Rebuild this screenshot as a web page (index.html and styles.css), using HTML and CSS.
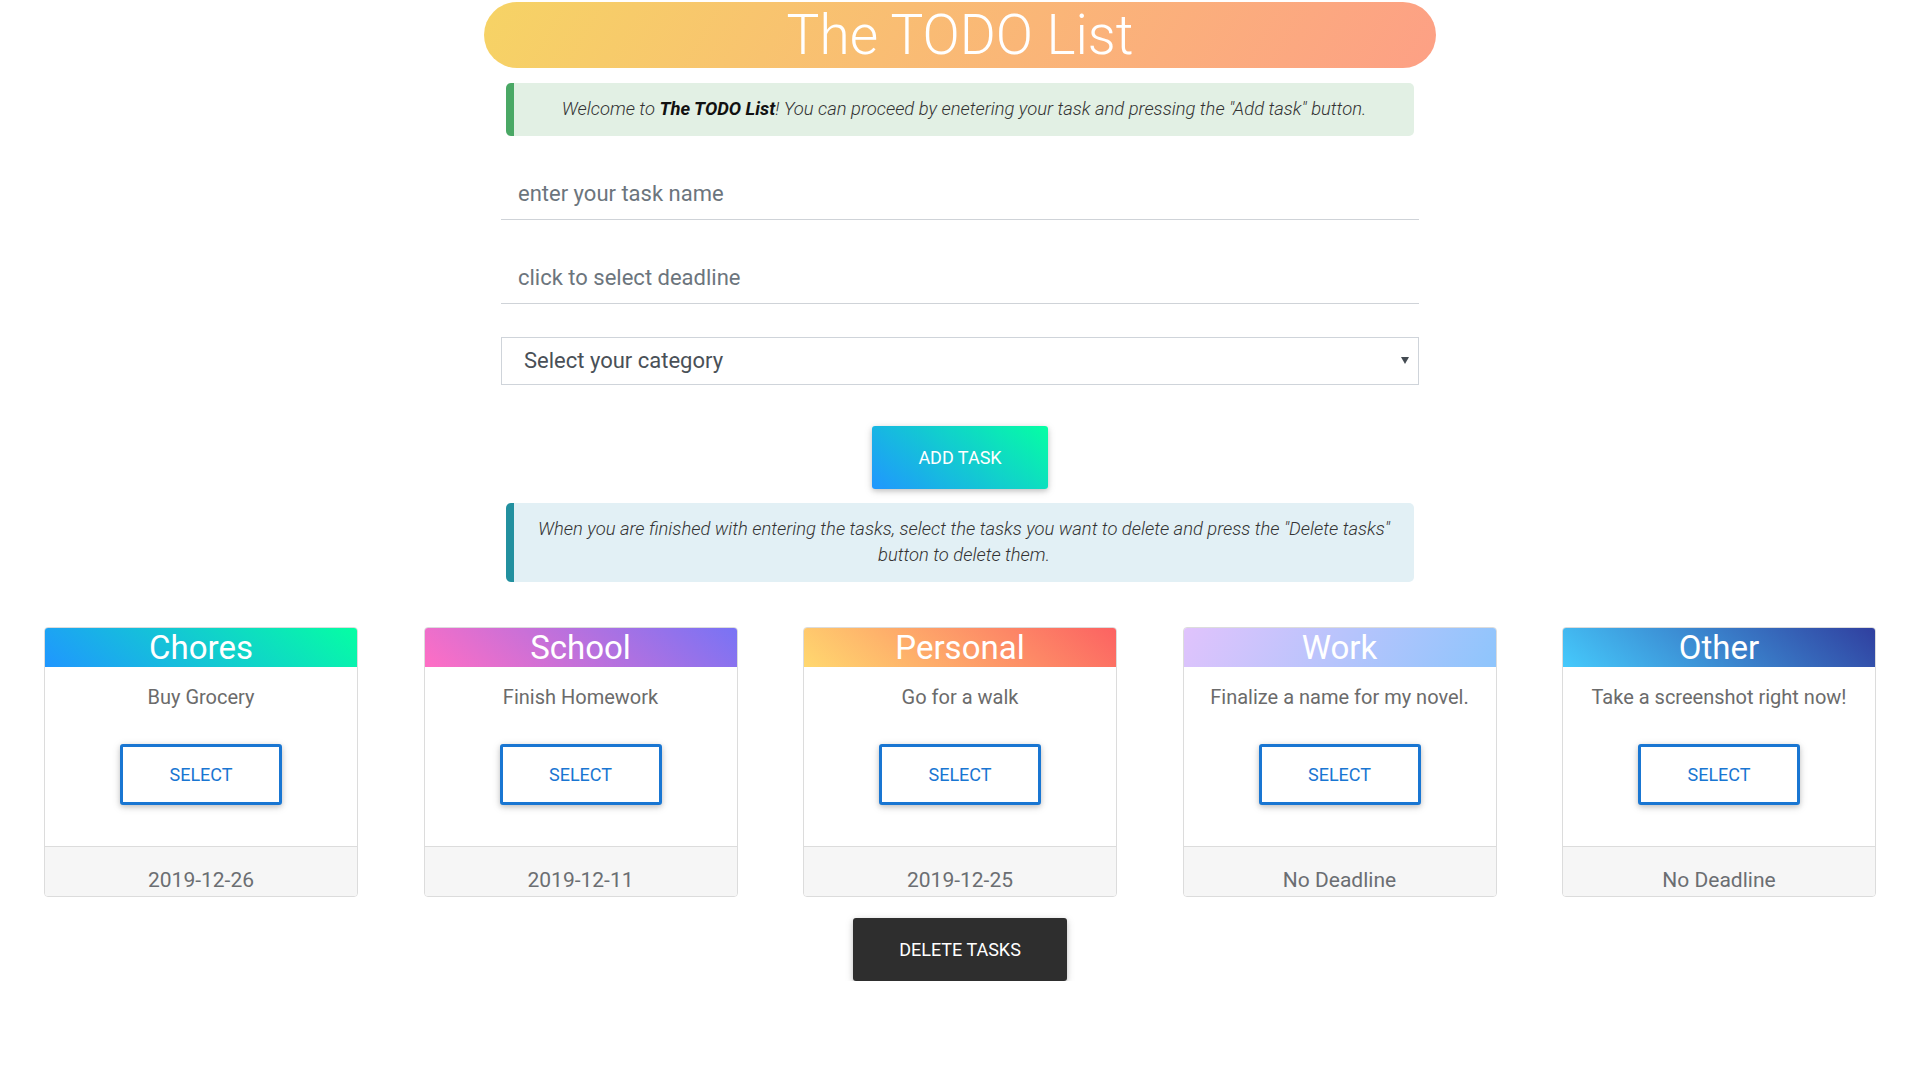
FILE: index.html
```html
<!DOCTYPE html>
<html lang="en">
<head>
<meta charset="utf-8">
<title>The TODO List</title>
<link rel="stylesheet" href="styles.css">
</head>
<body>
<div class="page">
  <header class="title-bar">
    <h1 class="title">The TODO List</h1>
  </header>

  <section class="form-area">
    <div class="callout callout-green">
      <p>Welcome to <strong>The TODO List</strong>! You can proceed by enetering your task and pressing the "Add task" button.</p>
    </div>

    <input class="line-input first" type="text" placeholder="enter your task name">
    <input class="line-input" type="text" placeholder="click to select deadline">

    <div class="select-wrap">
      <select class="category">
        <option>Select your category</option>
        <option>Chores</option>
        <option>School</option>
        <option>Personal</option>
        <option>Work</option>
        <option>Other</option>
      </select>
    </div>

    <button class="btn btn-add" type="button">Add task</button>

    <div class="callout callout-blue">
      <p>When you are finished with entering the tasks, select the tasks you want to delete and press the "Delete tasks" button to delete them.</p>
    </div>
  </section>

  <section class="cards">
    <article class="card">
      <div class="card-header grad-chores">Chores</div>
      <div class="card-body">
        <p class="card-text">Buy Grocery</p>
        <button class="btn btn-select" type="button">Select</button>
      </div>
      <div class="card-footer">2019-12-26</div>
    </article>
    <article class="card">
      <div class="card-header grad-school">School</div>
      <div class="card-body">
        <p class="card-text">Finish Homework</p>
        <button class="btn btn-select" type="button">Select</button>
      </div>
      <div class="card-footer">2019-12-11</div>
    </article>
    <article class="card">
      <div class="card-header grad-personal">Personal</div>
      <div class="card-body">
        <p class="card-text">Go for a walk</p>
        <button class="btn btn-select" type="button">Select</button>
      </div>
      <div class="card-footer">2019-12-25</div>
    </article>
    <article class="card">
      <div class="card-header grad-work">Work</div>
      <div class="card-body">
        <p class="card-text">Finalize a name for my novel.</p>
        <button class="btn btn-select" type="button">Select</button>
      </div>
      <div class="card-footer">No Deadline</div>
    </article>
    <article class="card">
      <div class="card-header grad-other">Other</div>
      <div class="card-body">
        <p class="card-text">Take a screenshot right now!</p>
        <button class="btn btn-select" type="button">Select</button>
      </div>
      <div class="card-footer">No Deadline</div>
    </article>
  </section>

  <div class="delete-row">
    <button class="btn btn-delete" type="button">Delete tasks</button>
  </div>
</div>
</body>
</html>
```

FILE: styles.css
```css
* {
  box-sizing: border-box;
}

html, body {
  margin: 0;
  padding: 0;
  background: #ffffff;
}

body {
  font-family: Roboto, "Liberation Sans", Arial, sans-serif;
  color: #212529;
}

.page {
  width: 1920px;
  padding-top: 2px;
}

/* ---------- title ---------- */
.title-bar {
  width: 952px;
  height: 66px;
  margin: 0 auto;
  border-radius: 33px;
  background: linear-gradient(120deg, #f6d365 0%, #fda085 100%);
  display: flex;
  align-items: center;
  justify-content: center;
}

.title {
  margin: 0;
  font-size: 55px;
  font-weight: 300;
  line-height: 66px;
  color: #ffffff;
}

/* ---------- form ---------- */
.form-area {
  width: 918px;
  margin: 0 auto;
  display: flex;
  flex-direction: column;
  align-items: stretch;
}

.callout {
  margin: 0 5px;
  border-left: 8px solid;
  border-radius: 5px;
  padding: 13px 16px;
  text-align: center;
}

.callout p {
  margin: 0;
  font-size: 18.4px;
  font-weight: 300;
  font-style: italic;
  line-height: 26.5px;
  color: #333333;
}

.callout strong {
  font-weight: 700;
  color: #111111;
}

.callout-green {
  margin-top: 15px;
  background: #e2f0e4;
  border-left-color: #4aa865;
}

.callout-blue {
  margin-top: 14px;
  background: #e2f0f5;
  border-left-color: #22909f;
}

.line-input {
  display: block;
  width: 100%;
  height: 52px;
  margin: 32px 0 0;
  padding: 0 17px;
  border: none;
  border-bottom: 1px solid #cfd3d8;
  border-radius: 0;
  background: transparent;
  font-family: Roboto, "Liberation Sans", Arial, sans-serif;
  font-size: 22px;
  color: #495057;
  outline: none;
}

.line-input.first {
  margin-top: 32px;
}

.line-input::placeholder {
  color: #6c757d;
  opacity: 1;
}

.select-wrap {
  position: relative;
  margin-top: 33px;
}

.select-wrap::after {
  content: "";
  position: absolute;
  right: 10px;
  top: 20px;
  width: 0;
  height: 0;
  border-left: 4.5px solid transparent;
  border-right: 4.5px solid transparent;
  border-top: 7px solid #444b52;
  pointer-events: none;
}

.category {
  display: block;
  width: 100%;
  height: 48px;
  padding: 0 30px 0 22px;
  border: 1px solid #cfd4da;
  border-radius: 0;
  background: #ffffff;
  font-family: Roboto, "Liberation Sans", Arial, sans-serif;
  font-size: 22px;
  color: #495057;
  -webkit-appearance: none;
  appearance: none;
  outline: none;
}

/* ---------- buttons ---------- */
.btn {
  display: inline-flex;
  align-items: center;
  justify-content: center;
  height: 63px;
  padding: 0 47px;
  border: none;
  border-radius: 3px;
  font-family: Roboto, "Liberation Sans", Arial, sans-serif;
  font-size: 18px;
  font-weight: 400;
  text-transform: uppercase;
  color: #ffffff;
  cursor: pointer;
  box-shadow: 0 2px 5px 0 rgba(0, 0, 0, 0.16), 0 2px 10px 0 rgba(0, 0, 0, 0.12);
}

.btn-add {
  align-self: center;
  margin-top: 41px;
  width: 176px;
  padding: 0;
  background: linear-gradient(40deg, #2096ff, #05ffa3);
}

.btn-select {
  width: 162px;
  height: 61px;
  padding: 0;
  margin-top: 32px;
  border: 3px solid #1976d2;
  background: #ffffff;
  color: #1976d2;
}

.btn-delete {
  width: 214px;
  padding: 0;
  background: #2e2e2e;
}

/* ---------- cards ---------- */
.cards {
  margin-top: 45px;
  display: grid;
  grid-template-columns: repeat(5, 314px);
  column-gap: 65.5px;
  justify-content: center;
}

.card {
  display: flex;
  flex-direction: column;
  border: 1px solid #dcdcdc;
  border-radius: 4px;
  overflow: hidden;
  background: #ffffff;
}

.card-header {
  height: 39px;
  line-height: 39px;
  text-align: center;
  font-size: 33px;
  font-weight: 400;
  color: #ffffff;
  white-space: nowrap;
}

.grad-chores {
  background: linear-gradient(40deg, #2096ff, #05ffa3);
}

.grad-school {
  background: linear-gradient(40deg, #ff6ec4, #7873f5);
}

.grad-personal {
  background: linear-gradient(40deg, #ffd86f, #fc6262);
}

.grad-work {
  background: linear-gradient(120deg, #e0c3fc 0%, #8ec5fc 100%);
}

.grad-other {
  background: linear-gradient(40deg, #45cafc, #303f9f);
}

.card-body {
  display: flex;
  flex-direction: column;
  align-items: center;
  padding: 15px 12px 41px;
}

.card-text {
  margin: 0;
  font-size: 20px;
  line-height: 30px;
  color: #6b6b6b;
  text-align: center;
  white-space: nowrap;
}

.card-footer {
  border-top: 1px solid #dcdcdc;
  background: #f6f6f6;
  padding: 21px 12px 4px;
  font-size: 21px;
  line-height: 24px;
  text-align: center;
  color: #6b6e72;
}

/* ---------- delete ---------- */
.delete-row {
  display: flex;
  justify-content: center;
  margin-top: 21px;
}
```
